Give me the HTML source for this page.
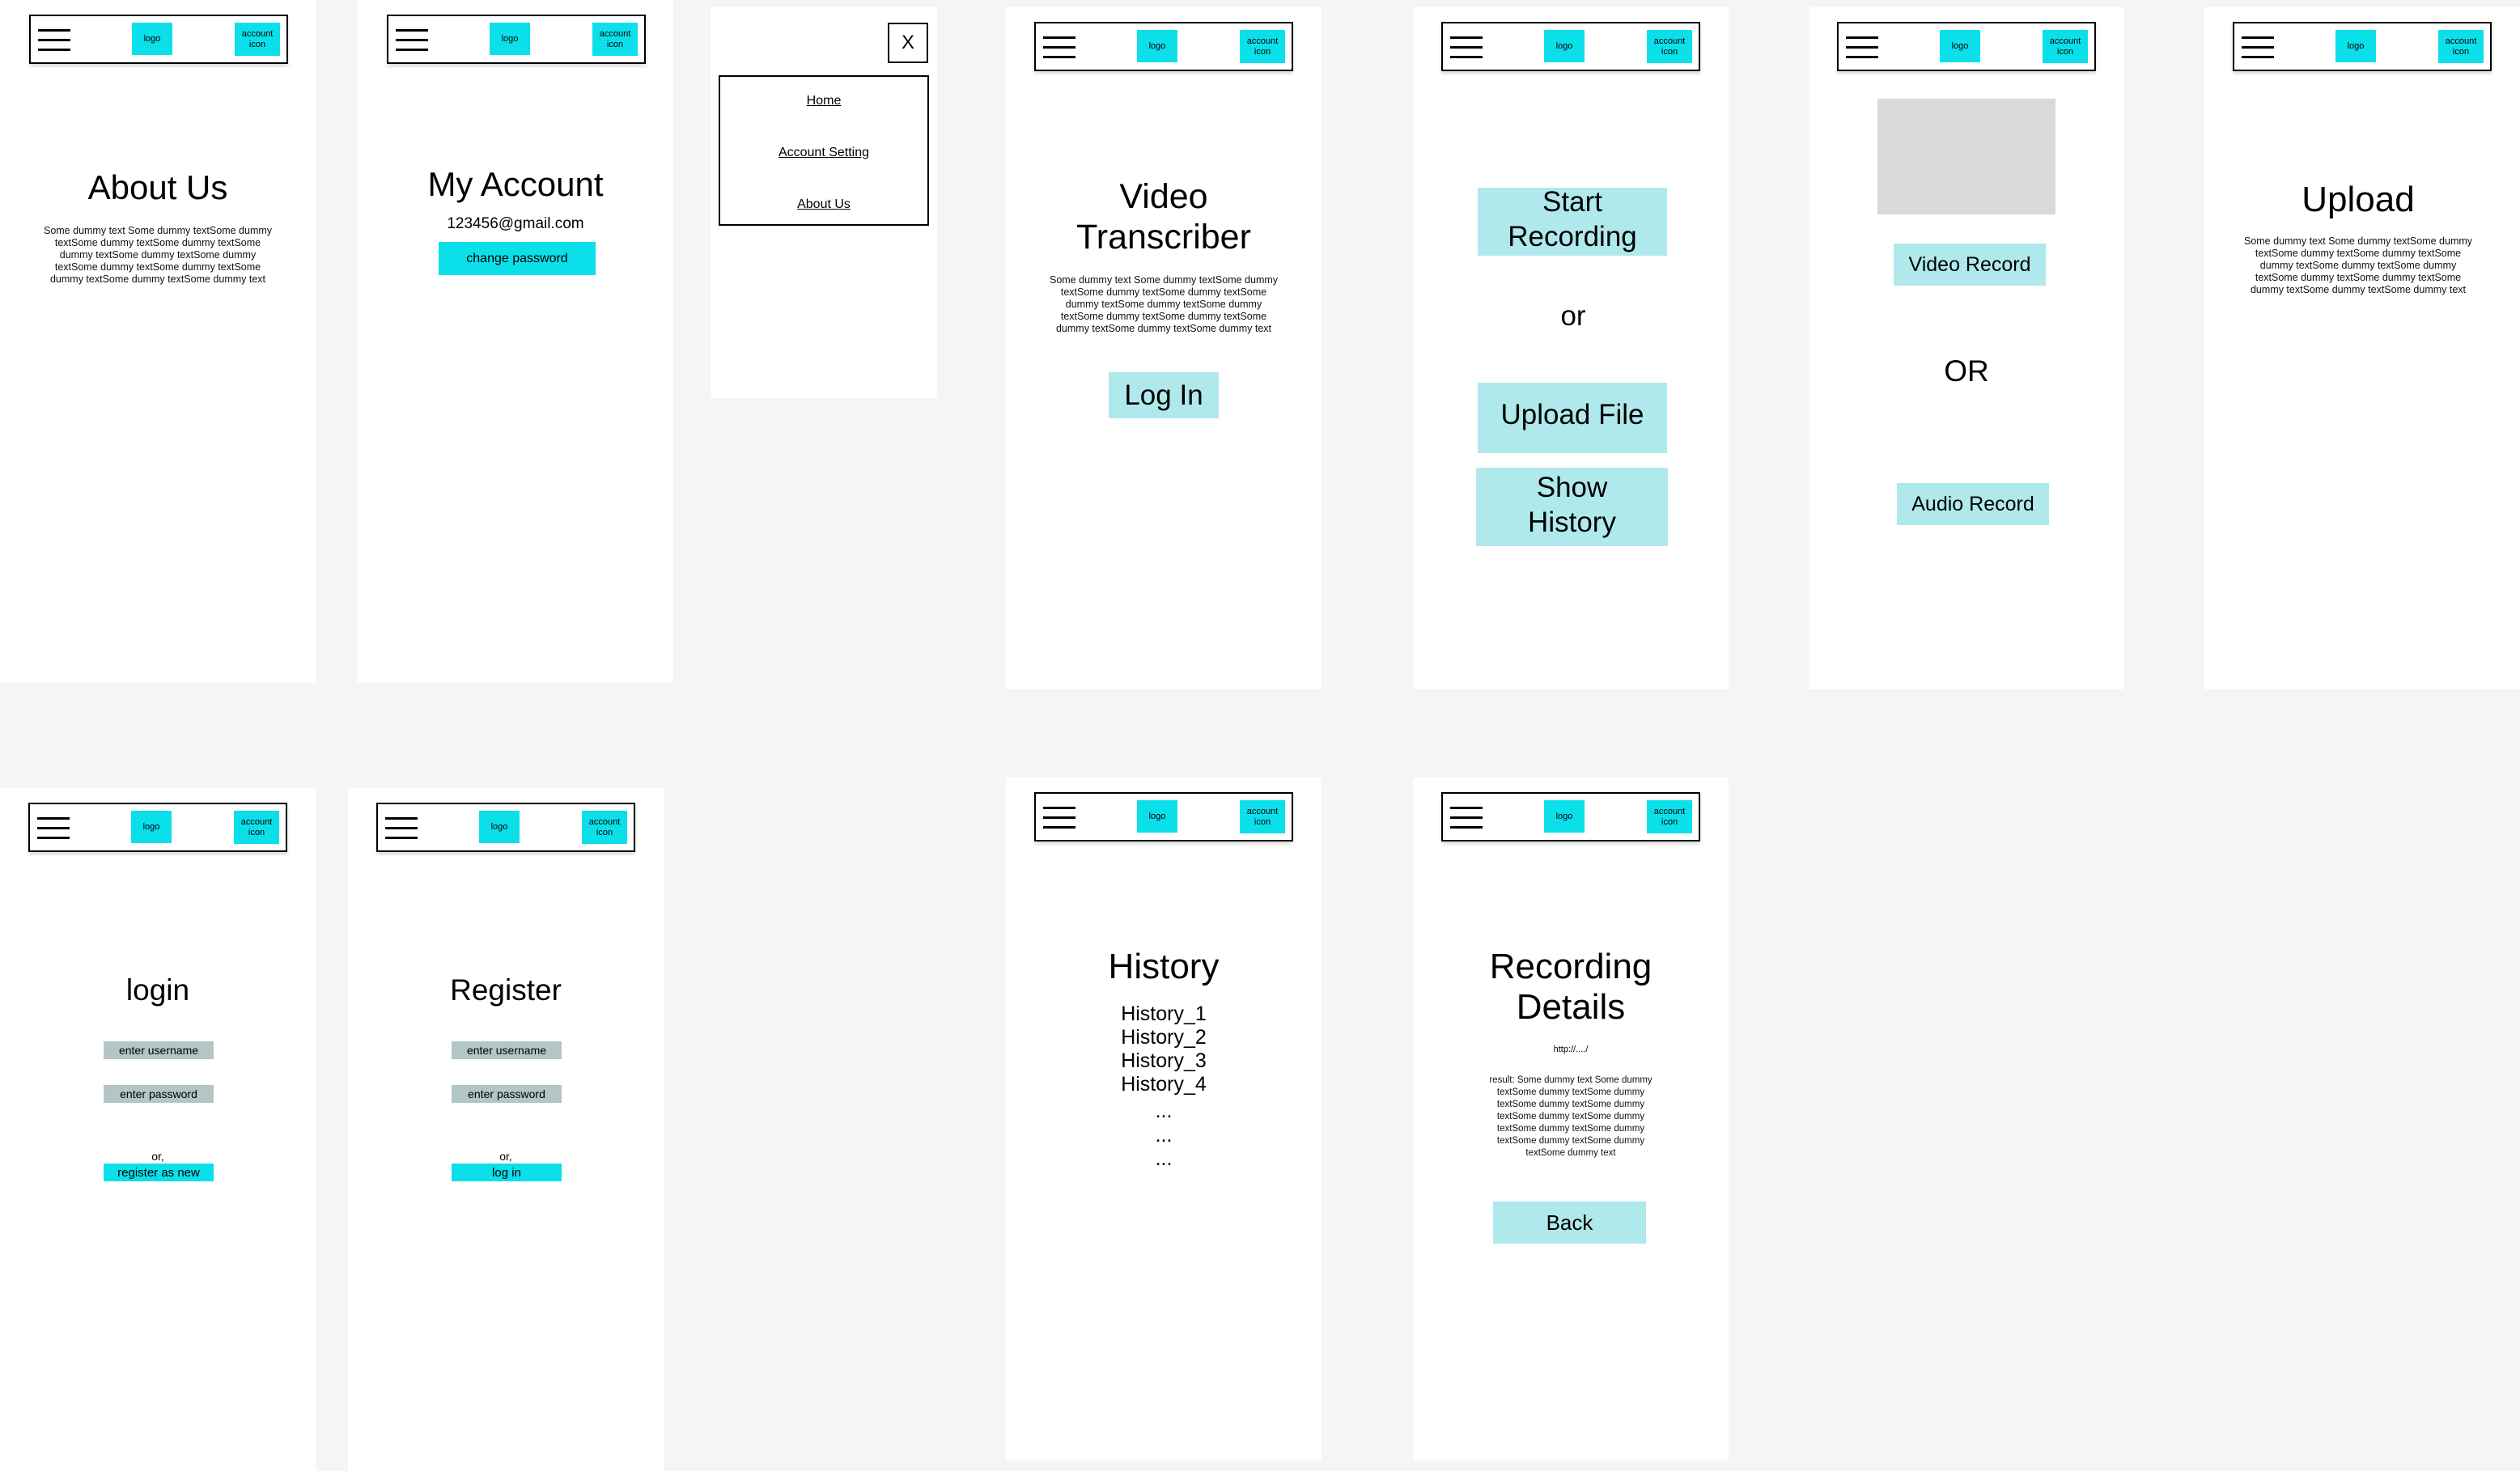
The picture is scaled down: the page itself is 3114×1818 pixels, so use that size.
<!DOCTYPE html>
<html><head><meta charset="utf-8"><style>
*{margin:0;padding:0;box-sizing:border-box}
body{width:3114px;height:1818px;background:#f5f5f5;position:relative;overflow:hidden;font-family:"Liberation Sans",sans-serif;color:#000}
.p{position:absolute;background:#fff}
.nav{position:absolute;width:320px;height:61px;border:2px solid #000;background:#fff;box-shadow:0 3px 4px rgba(0,0,0,0.15)}
.hb{position:absolute;left:9px;width:40px;height:3px;background:#000}
.logo{position:absolute;left:125px;top:8px;width:50px;height:40px;background:#0be0ea;font-size:11px;display:flex;align-items:center;justify-content:center}
.acc{position:absolute;left:252px;top:8px;width:56px;height:41px;background:#0be0ea;font-size:11px;line-height:13px;display:flex;align-items:center;justify-content:center;text-align:center}
.t{position:absolute;left:0;width:100%;text-align:center;white-space:nowrap}
.para{position:absolute;left:0;width:100%;text-align:center;font-size:12.5px;line-height:15px;color:#111;white-space:nowrap}
.btn{position:absolute;display:flex;align-items:center;justify-content:center;text-align:center}
.lc{background:#afe9ec}
.cy{background:#0be0ea}
.gr{background:#b3c5c5}
</style></head><body>

<div class="p" style="left:0;top:0;width:390px;height:844px">
 <div class="nav" style="left:36px;top:18px"><div class="hb" style="top:16px"></div><div class="hb" style="top:28px"></div><div class="hb" style="top:40px"></div><div class="logo">logo</div><div class="acc">account<br>icon</div></div>
 <div class="t" style="top:206px;font-size:42px;line-height:52px">About Us</div>
 <div class="para" style="top:278px">Some dummy text Some dummy textSome dummy<br>textSome dummy textSome dummy textSome<br>dummy textSome dummy textSome dummy<br>textSome dummy textSome dummy textSome<br>dummy textSome dummy textSome dummy text</div>
</div>

<div class="p" style="left:442px;top:0;width:390px;height:844px">
 <div class="nav" style="left:36px;top:18px"><div class="hb" style="top:16px"></div><div class="hb" style="top:28px"></div><div class="hb" style="top:40px"></div><div class="logo">logo</div><div class="acc">account<br>icon</div></div>
 <div class="t" style="top:201px;font-size:42px;line-height:54px">My Account</div>
 <div class="t" style="top:265px;font-size:19px;line-height:24px">123456@gmail.com</div>
 <div class="btn cy" style="left:100px;top:299px;width:194px;height:41px;font-size:16px">change password</div>
</div>

<div class="p" style="left:878px;top:9px;width:280px;height:483px">
 <div style="position:absolute;left:219px;top:19px;width:50px;height:50px;border:2px solid #000;font-size:24px;display:flex;align-items:center;justify-content:center">X</div>
 <div style="position:absolute;left:10px;top:84px;width:260px;height:186px;border:2px solid #000">
  <div class="t" style="top:19px;font-size:16px;line-height:22px;text-decoration:underline">Home</div>
  <div class="t" style="top:83px;font-size:16px;line-height:22px;text-decoration:underline">Account Setting</div>
  <div class="t" style="top:147px;font-size:16px;line-height:22px;text-decoration:underline">About Us</div>
 </div>
</div>

<div class="p" style="left:1243px;top:9px;width:390px;height:843px">
 <div class="nav" style="left:35px;top:18px"><div class="hb" style="top:16px"></div><div class="hb" style="top:28px"></div><div class="hb" style="top:40px"></div><div class="logo">logo</div><div class="acc">account<br>icon</div></div>
 <div class="t" style="top:209px;font-size:43px;line-height:50px">Video</div>
 <div class="t" style="top:259px;font-size:43px;line-height:50px">Transcriber</div>
 <div class="para" style="top:330px">Some dummy text Some dummy textSome dummy<br>textSome dummy textSome dummy textSome<br>dummy textSome dummy textSome dummy<br>textSome dummy textSome dummy textSome<br>dummy textSome dummy textSome dummy text</div>
 <div class="btn lc" style="left:127px;top:451px;width:136px;height:57px;font-size:35px">Log In</div>
</div>

<div class="p" style="left:1746px;top:9px;width:390px;height:843px">
 <div class="nav" style="left:35px;top:18px"><div class="hb" style="top:16px"></div><div class="hb" style="top:28px"></div><div class="hb" style="top:40px"></div><div class="logo">logo</div><div class="acc">account<br>icon</div></div>
 <div class="btn lc" style="left:80px;top:223px;width:234px;height:84px;font-size:35px;line-height:43px;padding-bottom:6px">Start<br>Recording</div>
 <div class="t" style="top:360px;font-size:35px;line-height:44px;padding-left:6px">or</div>
 <div class="btn lc" style="left:80px;top:464px;width:234px;height:87px;font-size:35px;padding-bottom:8px">Upload File</div>
 <div class="btn lc" style="left:78px;top:569px;width:237px;height:97px;font-size:35px;line-height:43px;padding-bottom:6px">Show<br>History</div>
</div>

<div class="p" style="left:2235px;top:9px;width:390px;height:843px">
 <div class="nav" style="left:35px;top:18px"><div class="hb" style="top:16px"></div><div class="hb" style="top:28px"></div><div class="hb" style="top:40px"></div><div class="logo">logo</div><div class="acc">account<br>icon</div></div>
 <div style="position:absolute;left:85px;top:113px;width:220px;height:143px;background:#d9d9d9"></div>
 <div class="btn lc" style="left:105px;top:292px;width:188px;height:52px;font-size:25px">Video Record</div>
 <div class="t" style="top:428px;font-size:37px;line-height:44px">OR</div>
 <div class="btn lc" style="left:109px;top:588px;width:188px;height:52px;font-size:25px">Audio Record</div>
</div>

<div class="p" style="left:2724px;top:9px;width:390px;height:843px">
 <div class="nav" style="left:35px;top:18px"><div class="hb" style="top:16px"></div><div class="hb" style="top:28px"></div><div class="hb" style="top:40px"></div><div class="logo">logo</div><div class="acc">account<br>icon</div></div>
 <div class="t" style="top:210px;font-size:44px;line-height:56px;padding-right:10px">Upload</div>
 <div class="para" style="top:282px;padding-right:10px">Some dummy text Some dummy textSome dummy<br>textSome dummy textSome dummy textSome<br>dummy textSome dummy textSome dummy<br>textSome dummy textSome dummy textSome<br>dummy textSome dummy textSome dummy text</div>
</div>

<div class="p" style="left:0;top:974px;width:390px;height:844px">
 <div class="nav" style="left:35px;top:18px"><div class="hb" style="top:16px"></div><div class="hb" style="top:28px"></div><div class="hb" style="top:40px"></div><div class="logo">logo</div><div class="acc">account<br>icon</div></div>
 <div class="t" style="top:227px;font-size:37px;line-height:46px">login</div>
 <div class="btn gr" style="left:128px;top:313px;width:136px;height:22px;font-size:14px">enter username</div>
 <div class="btn gr" style="left:128px;top:367px;width:136px;height:22px;font-size:14px">enter password</div>
 <div class="t" style="top:447px;font-size:14px;line-height:16px">or,</div>
 <div class="btn cy" style="left:128px;top:464px;width:136px;height:22px;font-size:15px">register as new</div>
</div>

<div class="p" style="left:430px;top:974px;width:390px;height:844px">
 <div class="nav" style="left:35px;top:18px"><div class="hb" style="top:16px"></div><div class="hb" style="top:28px"></div><div class="hb" style="top:40px"></div><div class="logo">logo</div><div class="acc">account<br>icon</div></div>
 <div class="t" style="top:227px;font-size:37px;line-height:46px">Register</div>
 <div class="btn gr" style="left:128px;top:313px;width:136px;height:22px;font-size:14px">enter username</div>
 <div class="btn gr" style="left:128px;top:367px;width:136px;height:22px;font-size:14px">enter password</div>
 <div class="t" style="top:447px;font-size:14px;line-height:16px">or,</div>
 <div class="btn cy" style="left:128px;top:464px;width:136px;height:22px;font-size:15px">log in</div>
</div>

<div class="p" style="left:1243px;top:961px;width:390px;height:844px">
 <div class="nav" style="left:35px;top:18px"><div class="hb" style="top:16px"></div><div class="hb" style="top:28px"></div><div class="hb" style="top:40px"></div><div class="logo">logo</div><div class="acc">account<br>icon</div></div>
 <div class="t" style="top:206px;font-size:44px;line-height:56px">History</div>
 <div class="t" style="top:278px;font-size:25px;line-height:29px">History_1<br>History_2<br>History_3<br>History_4</div>
 <div class="t" style="top:398px;font-size:25px;line-height:29.5px">...<br>...<br>...</div>
</div>

<div class="p" style="left:1746px;top:961px;width:390px;height:844px">
 <div class="nav" style="left:35px;top:18px"><div class="hb" style="top:16px"></div><div class="hb" style="top:28px"></div><div class="hb" style="top:40px"></div><div class="logo">logo</div><div class="acc">account<br>icon</div></div>
 <div class="t" style="top:209px;font-size:44px;line-height:50px">Recording<br>Details</div>
 <div class="t" style="top:328px;font-size:11px;line-height:16px">http://..../</div>
 <div class="para" style="top:367px;font-size:11.5px;line-height:15px">result: Some dummy text Some dummy<br>textSome dummy textSome dummy<br>textSome dummy textSome dummy<br>textSome dummy textSome dummy<br>textSome dummy textSome dummy<br>textSome dummy textSome dummy<br>textSome dummy text</div>
 <div class="btn lc" style="left:99px;top:524px;width:189px;height:52px;font-size:26px">Back</div>
</div>

</body></html>
